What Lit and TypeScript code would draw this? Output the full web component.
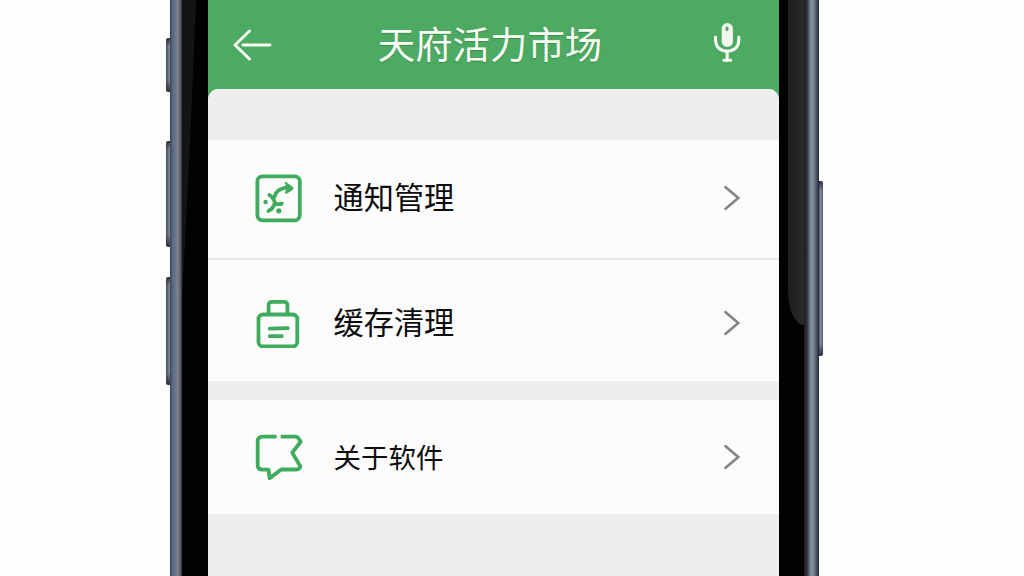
import { LitElement, html, css, svg } from "lit";
import { customElement, property } from "lit/decorators.js";

const icons = {
  notify: svg`
    <rect x="3.4" y="3.3" width="42.4" height="44" rx="5" />
    <path d="M20.6 23.6C21.4 18.6 25.6 15.6 33 14.4" />
    <path class="solid" d="M31.6 9.6L38.8 15L37 17.2L31.8 20L33.2 15Z" />
    <path d="M15.4 22C19 24.4 20.6 27 20.8 30.6C23 31.3 25.4 31.3 27.8 30.6M20.6 31L18.2 35.4L14.4 38" />
    <circle class="dot" cx="11.6" cy="29" r="2.2" />
    <circle class="dot" cx="24.8" cy="37.8" r="2.6" />
  `,
  cache: svg`
    <path d="M14.6 16V7.5Q14.6 3.9 18 3.9H30Q33.4 3.9 33.4 7.5V16" />
    <rect x="4.5" y="16.5" width="38.8" height="32" rx="4.5" />
    <path d="M15.8 30.6L33.8 30.2M15.8 38.2H27.8" />
  `,
  about: svg`
    <path class="butt" d="M22.6 4.6H8.6Q3.7 4.6 3.7 9.4V33Q3.7 37.7 8.4 37.7H14.6L15.6 46.2L27.2 37.5H42.4Q45.6 37.5 46.4 34.4L38.2 20.6L46.7 9.8L44.6 6.4Q43.6 4.6 41.6 4.6H26.6" />
  `
};

@customElement("settings-row")
export class SettingsRow extends LitElement {
  @property() label = "";
  @property() icon: keyof typeof icons = "notify";

  static styles = css`
    :host {
      display: flex;
      align-items: center;
      box-sizing: border-box;
      padding: 0 39px 0 46px;
      background: #fcfcfc;
      font-size: 30.2px;
      color: #0c0c0c;
    }
    .icon {
      width: 50px;
      height: 50px;
      flex: none;
      fill: none;
      stroke: #3fab5c;
      stroke-width: 3.8;
      stroke-linecap: round;
      stroke-linejoin: round;
    }
    .butt {
      stroke-linecap: butt;
    }
    .solid {
      fill: #3fab5c;
      stroke-width: 1.6;
    }
    .dot {
      fill: #3fab5c;
      stroke: none;
    }
    .label {
      flex: 1;
      margin: 0 0 3px 29.5px;
      line-height: 44px;
      white-space: nowrap;
    }
    .chevron {
      width: 17px;
      height: 26px;
      fill: none;
      stroke: #858585;
      stroke-width: 2.7;
      stroke-linecap: round;
    }
  `;

  render() {
    return html`
      <svg class="icon" viewBox="0 0 50 50">${icons[this.icon]}</svg>
      <span class="label">${this.label}</span>
      <svg class="chevron" viewBox="0 0 17 26">
        <path d="M2.6 2.2L15.3 13L2.6 23.8" />
      </svg>
    `;
  }
}

@customElement("app-root")
export class AppRoot extends LitElement {
  static styles = css`
    :host {
      display: flex;
      width: 1024px;
      height: 576px;
      overflow: hidden;
      background: #fefefe;
      font-family: "Noto Sans CJK SC", sans-serif;
    }
    .buttons {
      display: flex;
      flex-direction: column;
      width: 4px;
    }
    .buttons.left {
      margin-left: 166px;
      padding-top: 38px;
    }
    .buttons.right {
      padding-top: 181px;
    }
    .key {
      border-radius: 2px 0 0 2px;
      background:
        linear-gradient(#2a3040, transparent 8px, transparent calc(100% - 12px), #2a3040),
        linear-gradient(90deg, #414858, #8b939e);
    }
    .power {
      height: 54px;
    }
    .volume {
      height: 106px;
      margin-top: 49px;
    }
    .volume.down {
      height: 108px;
      margin-top: 30px;
    }
    .side {
      height: 175px;
      width: 4px;
      border-radius: 0 2px 2px 0;
      background:
        linear-gradient(#2a3040, transparent 10px, transparent calc(100% - 12px), #2a3040),
        linear-gradient(90deg, #535b75, #8b91a8 50%, #4a5068);
    }
    .rail {
      width: 12px;
      background: linear-gradient(90deg, #394454, #5a6a82 22%, #64738a 40%, #7d7f8c 62%, #6f6f7b 78%, #30323a);
    }
    .rail.right {
      width: 15px;
      background: linear-gradient(90deg, #191b26, #30343f 22%, #6f7c89 40%, #8793a0 55%, #64707e 72%, #454d60 86%, #20242e);
    }
    .bezel {
      width: 26px;
      background: #020203;
    }
    .bezel.right {
      width: 25px;
    }
    .shine {
      height: 300px;
      width: 14px;
      background: #131416;
      clip-path: polygon(0 0, 100% 0, 60% 45%, 0 100%);
    }
    .bezel.right .shine {
      width: 16px;
      height: 325px;
      margin-left: 9px;
      background: linear-gradient(90deg, #1e1e21, #29292c);
      border-bottom-left-radius: 16px 34px;
      clip-path: none;
    }
    .screen {
      display: flex;
      flex-direction: column;
      width: 571px;
      background: #4caa62;
    }
    header {
      display: flex;
      align-items: center;
      box-sizing: border-box;
      height: 89px;
      padding: 0 38px 0 24px;
      flex: none;
      color: #fff;
    }
    .back {
      width: 40px;
      height: 34px;
      fill: none;
      stroke: #fafff6;
      stroke-width: 2.9;
      stroke-linecap: round;
      stroke-linejoin: round;
    }
    h1 {
      flex: 1;
      margin: 0 0 3px;
      text-align: center;
      font-size: 37.4px;
      line-height: 54px;
      font-weight: 400;
      color: #fafff6;
      text-indent: -5px;
      text-shadow: 0 1px 1px #3b8b4e;
    }
    .mic {
      width: 28px;
      height: 42px;
      margin-bottom: 3px;
      fill: none;
      stroke: #fafff6;
      stroke-width: 3;
      stroke-linecap: round;
    }
    .capsule {
      fill: #f2f7f0;
      stroke: none;
    }
    .hole {
      fill: #5f9a6b;
      stroke: none;
    }
    main {
      flex: 1;
      padding-top: 51px;
      border-radius: 11px 11px 0 0;
      background: #eeeeef;
      box-shadow: inset 0 1px 1px #f8f8f8;
    }
    .notify {
      height: 120px;
      padding-bottom: 3px;
      border-bottom: 2px solid #e6e6e6;
    }
    .cache {
      height: 121px;
      padding-top: 4px;
    }
    .about {
      height: 114px;
      margin-top: 19px;
      font-size: 27.5px;
    }
  `;

  render() {
    return html`
      <div class="buttons left">
        <div class="key power"></div>
        <div class="key volume"></div>
        <div class="key volume down"></div>
      </div>
      <div class="rail"></div>
      <div class="bezel"><div class="shine"></div></div>
      <div class="screen">
        <header>
          <svg class="back" viewBox="0 0 40 34">
            <path d="M17.5 3L3 17L17.5 31M11 17H38" />
          </svg>
          <h1>天府活力市场</h1>
          <svg class="mic" viewBox="0 0 28 42">
            <rect class="capsule" x="8.7" y="1" width="11.2" height="24" rx="5.6" />
            <ellipse class="hole" cx="14" cy="6.8" rx="1.6" ry="2.4" />
            <path d="M2.6 15V18C2.6 25.5 8 29.2 14.2 29.2S25.8 25.5 25.8 18V15M14.2 30V38.5M10.8 38.2H17.6" />
          </svg>
        </header>
        <main>
          <settings-row class="notify" icon="notify" label="通知管理"></settings-row>
          <settings-row class="cache" icon="cache" label="缓存清理"></settings-row>
          <settings-row class="about" icon="about" label="关于软件"></settings-row>
        </main>
      </div>
      <div class="bezel right"><div class="shine"></div></div>
      <div class="rail right"></div>
      <div class="buttons right"><div class="side"></div></div>
    `;
  }
}
